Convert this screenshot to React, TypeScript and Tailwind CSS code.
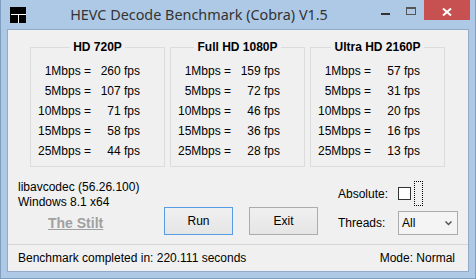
const rates = [1, 5, 10, 15, 25];

const groups = [
  { title: 'HD 720P', fps: [260, 107, 71, 58, 44] },
  { title: 'Full HD 1080P', fps: [159, 72, 46, 36, 28] },
  { title: 'Ultra HD 2160P', fps: [57, 31, 20, 16, 13] },
];

function AppIcon() {
  return (
    <svg width="16" height="16" viewBox="0 0 16 16" className="block">
      <rect width="16" height="16" fill="#000" />
      <path d="M1 7.5H16M8.5 7.5V16" stroke="#fff" strokeWidth="1" />
    </svg>
  );
}

function TitleBar() {
  return (
    <div className="flex h-[29px] items-start">
      <div className="ml-[9px] mt-[7px]">
        <AppIcon />
      </div>
      <div
        className="mt-[5px] flex-1 text-center text-[14.4px] leading-[20px] text-[#333]"
        style={{ fontFamily: '"Noto Sans", "Open Sans", sans-serif' }}
      >
        HEVC Decode Benchmark (Cobra) V1.5
      </div>
      <div className="flex w-[26px] justify-center pt-[13px]">
        <div className="h-[2px] w-[9px] bg-[#333]" />
      </div>
      <div className="flex w-[26px] justify-center pt-[7px]">
        <div className="h-[8px] w-[10px] border border-t-2 border-[#555]" />
      </div>
      <div className="mr-[5px] flex h-[20px] w-[46px] justify-center bg-[#c75050] pt-[8px]">
        <svg width="10" height="8" viewBox="0 0 10 8">
          <path d="M1 0.5L9 7.5M9 0.5L1 7.5" stroke="#fff" strokeWidth="2" />
        </svg>
      </div>
    </div>
  );
}

function ResultGroup({ title, fps }: { title: string; fps: number[] }) {
  return (
    <fieldset className="w-[135px] border border-[#dcdcdc] pb-[5px]">
      <legend className="mx-auto px-[3px] text-[12px] font-bold leading-[14px]">{title}</legend>
      <div className="grid grid-cols-[60px_49px] pt-[7px] text-[12px] leading-[20px]">
        {rates.map((r, i) => (
          <div key={r} className="contents">
            <span className="text-right whitespace-pre">{r}Mbps =</span>
            <span className="text-right">{fps[i]} fps</span>
          </div>
        ))}
      </div>
    </fieldset>
  );
}

function Button({ label, primary }: { label: string; primary?: boolean }) {
  return (
    <div
      className={
        'flex h-[28px] w-[69px] items-center justify-center border bg-gradient-to-b from-[#f0f0f0] to-[#e5e5e5] text-[12px] ' +
        (primary ? 'border-[#569de5]' : 'border-[#acacac]')
      }
    >
      {label}
    </div>
  );
}

export default function App() {
  return (
    <div
      className="flex h-[279px] w-[476px] flex-col border-x border-b border-[#7f9dbf] bg-[#adc9e6] text-black"
      style={{ fontFamily: '"Liberation Sans", Arial, sans-serif' }}
    >
      <TitleBar />
      <div className="mx-[6px] flex h-[243px] flex-col border border-[#93aac6] bg-[#f0f0f0]">
        <div className="flex gap-[5px] pl-[22px] pt-[10px]">
          {groups.map((g) => (
            <ResultGroup key={g.title} title={g.title} fps={g.fps} />
          ))}
        </div>

        <div className="flex h-[77px] items-start">
          <div className="w-[156px] pl-[10px] pt-[13px] text-[12px] leading-[15px]">
            <div>libavcodec (56.26.100)</div>
            <div>Windows 8.1 x64</div>
            <div className="mt-[5px] pl-[30px] text-[14px] font-bold leading-[16px] text-[#a0a0a0] underline">
              The Stilt
            </div>
          </div>
          <div className="mt-[40px] flex gap-[16px]">
            <Button label="Run" primary />
            <Button label="Exit" />
          </div>
          <div className="ml-[20px] mt-[14px] flex flex-col gap-[5px] text-[12px]">
            <div className="flex h-[25px] items-center">
              <span className="w-[60px]">Absolute:</span>
              <div className="h-[13px] w-[13px] border border-[#333] bg-white" />
              <div className="ml-[3px] h-[25px] w-[9px] border border-dotted border-black" />
            </div>
            <div className="flex h-[24px] items-center">
              <span className="w-[60px]">Threads:</span>
              <div className="flex h-[24px] w-[60px] items-center justify-between border border-[#acacac] bg-[#f4f4f4] pl-[3px] pr-[5px]">
                <span>All</span>
                <svg width="7" height="5" viewBox="0 0 7 5">
                  <path d="M0.5 0.5L3.5 3.5L6.5 0.5" stroke="#555" strokeWidth="1.5" fill="none" />
                </svg>
              </div>
            </div>
          </div>
        </div>

        <div className="flex h-[27px] items-center justify-between border-t border-[#d7d7d7] pl-[10px] pr-[13px] text-[12px] leading-[15px]">
          <span>Benchmark completed in: 220.111 seconds</span>
          <span>Mode: Normal</span>
        </div>
      </div>
    </div>
  );
}
